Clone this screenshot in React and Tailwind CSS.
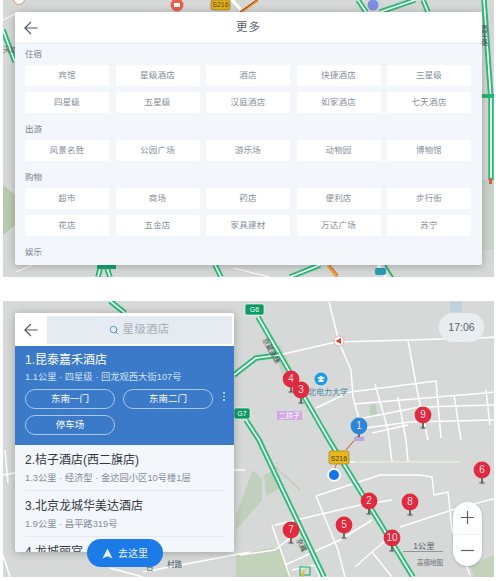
import React from "react";
import { Search } from "lucide-react";

const FONT = { fontFamily: '"Liberation Sans","Noto Sans CJK SC",sans-serif' };

const sections = [
  ["住宿", [["宾馆", "星级酒店", "酒店", "快捷酒店", "三星级"], ["四星级", "五星级", "汉庭酒店", "如家酒店", "七天酒店"]]],
  ["出游", [["风景名胜", "公园广场", "游乐场", "动物园", "博物馆"]]],
  ["购物", [["超市", "商场", "药店", "便利店", "步行街"], ["花店", "五金店", "家具建材", "万达广场", "苏宁"]]],
];

const BackArrow = () => (
  <svg width="16" height="16" viewBox="0 0 16 16" fill="none" stroke="#4f5966" strokeWidth="1.1">
    <path d="M14.5 8H2M8 2 1.8 8 8 14" />
  </svg>
);

function Highway({ points }) {
  return (
    <g fill="none" strokeLinejoin="round">
      <polyline points={points} stroke="#2dbb7a" strokeWidth="5.5" />
      <polyline points={points} stroke="#ffffff" strokeWidth="1.6" />
    </g>
  );
}

function Roads({ lines, width = 1.5 }) {
  return (
    <g fill="none" stroke="#ffffff" strokeWidth={width} strokeLinejoin="round">
      {lines.map((l, i) => (
        <polyline key={i} points={l} />
      ))}
    </g>
  );
}

function Badge({ x, y, w = 19, h = 11, label, color = "#0e9a68", text = "#ffffff", stroke = "#ffffff" }) {
  return (
    <g>
      <rect x={x} y={y} width={w} height={h} rx="2" fill={color} stroke={stroke} strokeWidth="0.6" />
      <text x={x + w / 2} y={y + h - 3} textAnchor="middle" fontSize="7" fill={text}>{label}</text>
    </g>
  );
}

function TopMap() {
  return (
    <svg className="absolute inset-0" width="491" height="277" viewBox="3 0 491 277" style={FONT}>
      <rect x="3" y="0" width="491" height="277" fill="#d5d8d6" />
      <path d="M3 185 L15 195 L15 225 L3 235Z" fill="#b8c9ac" />
      <path d="M482 180 H494 V250 H482Z" fill="#c9d2c9" />
      <Roads width={1} lines={["3,20 15,14", "16,272 40,262", "233,268 270,277"]} />
      <Highway points="3,30 15,62" />
      <Highway points="358,0 366,12" />
      <Highway points="380,12 415,0" />
      <Highway points="423,0 428,12" />
      <Highway points="484,0 491,100 491,180" />
      <rect x="482" y="94" width="12" height="4" fill="#25b574" />
      <rect x="489" y="178" width="3" height="6" fill="#e05a3a" />
      <Highway points="98,277 101,265" />
      <Highway points="110,277 106,265" />
      <rect x="97" y="265" width="19" height="4" fill="#1aa56c" />
      <Highway points="215,265 221,277" />
      <Highway points="290,277 320,265" />
      <polyline points="328,265 337,277" stroke="#e8a33a" strokeWidth="3" fill="none" />
      <polyline points="329,264 338,275" stroke="#d8452f" strokeWidth="1" fill="none" />
      <polyline points="386,277 378,265" stroke="#fff" strokeWidth="3" fill="none" />
      <polyline points="393,277 385,265" stroke="#25b574" strokeWidth="2" fill="none" />
      <rect x="375" y="268" width="11" height="7" rx="2" fill="#2a9fb5" />
      <polyline points="232,0 243,12" stroke="#fff" strokeWidth="3" fill="none" />
      <polyline points="258,0 241,12" stroke="#e8a33a" strokeWidth="3" fill="none" />
      <polyline points="257,0 240,12" stroke="#a52b20" strokeWidth="1" fill="none" />
      <circle cx="177" cy="5" r="6.5" fill="#e8604a" />
      <rect x="174" y="3" width="6" height="4" fill="#fff" />
      <Badge x={211} y={0} w={19} h={10} label="S216" color="#e3b21e" text="#5c4300" stroke="#8a6d10" />
      <circle cx="373" cy="5" r="5.5" fill="#7e8fe0" />
      <circle cx="19" cy="-1" r="5.5" fill="#fff" stroke="#e58d7c" strokeWidth="1" />
      <text x="3" y="52" fontSize="7" fill="#6a6f66">天城</text>
      <text x="484" y="25" fontSize="7" fill="#4b5563" writingMode="vertical-rl">昌平路</text>
    </svg>
  );
}

function Pin({ x, y, n, color = "#e02a40" }) {
  return (
    <g>
      <ellipse cx={x} cy={y + 13} rx="3" ry="1.2" fill="#8f9896" />
      <rect x={x - 0.8} y={y + 6} width="1.6" height="7" fill="#59534f" />
      <circle cx={x} cy={y} r="8.4" fill={color} />
      <text x={x} y={y + 3.4} textAnchor="middle" fontSize="10" fill="#f9dfe0">{n}</text>
    </g>
  );
}

function BottomMap() {
  return (
    <svg className="absolute inset-0" width="491" height="276" viewBox="3 301 491 276" style={FONT}>
      <rect x="3" y="301" width="491" height="276" fill="#d6d9d7" />
      <path d="M236 515 L253 470 L262 480 L262 500 L236 530Z" fill="#c0d0bc" />
      <path d="M264 475 L276 470 L280 488 L266 496Z" fill="#c0d0bc" />
      <path d="M236 555 L278 547 L292 577 L236 577Z" fill="#c3d3bb" />
      <path d="M470 565 L494 555 V577 H474Z" fill="#c3d3bb" />
      <path d="M370 405 L376 404 L377 416 L370 418Z" fill="#bfcfbb" />
      <path d="M273 350 L280 345 L300 385 L285 382Z" fill="#c3d1bd" />
      <path d="M450 302 H462 V312 H450Z" fill="#bcd3db" />
      <Roads
        lines={[
          "329,302 339,342 351,370 353,397 363,433",
          "279,355 336,342 480,338 496,337",
          "316,408 350,392 436,381 441,438",
          "408,340 418,395 428,440",
          "354,404 496,392",
          "358,419 420,407 496,405",
          "365,428 410,422 496,420",
          "372,433 408,425",
          "375,384 388,430 392,462",
          "398,397 406,440 408,462",
          "454,395 461,440",
          "486,390 490,425",
          "350,462 460,462",
          "316,496 380,475 420,475 432,477 434,495 448,492 452,530 470,575",
          "316,496 338,550 345,577",
          "275,525 360,505 392,500",
          "240,555 275,550 300,530",
          "285,565 340,540 372,520",
          "272,525 290,577",
          "355,567 372,552 392,535",
          "372,552 392,577",
          "400,527 452,510 496,498",
          "292,570 315,565 320,577",
          "3,475 15,473",
          "5,450 8,483",
          "234,470 245,470",
          "143,572 250,552",
          "110,568 143,577",
          "3,555 10,577",
        ]}
      />
      <polyline points="270,462 300,490" stroke="#c6c9bd" strokeWidth="1.5" fill="none" />
      <polyline points="355,462 480,462" stroke="#d3d4c4" strokeWidth="1" fill="none" />
      <Highway points="258,317 329,440 413,577" />
      <Highway points="246,420 259,440 324,577" />
      <Highway points="234,375 256,358 279,355" />
      <Highway points="110,301 125,313" />
      <polyline points="339,458 334,470" stroke="#d8452f" strokeWidth="0.8" fill="none" />
      <polyline points="346,450 358,436" stroke="#c94a3c" strokeWidth="1" fill="none" />
      <rect x="300" y="567" width="10" height="8" fill="none" stroke="#25b574" strokeWidth="1.2" />
      <polyline points="302,577 304,570" stroke="#e3c22e" strokeWidth="2" fill="none" />
      <Badge x={245} y={304} label="G6" />
      <Badge x={234} y={408} w={16} label="G7" />
      <rect x="277" y="411" width="25" height="9" fill="#d2a9e2" />
      <text x="289.5" y="418" textAnchor="middle" fontSize="7" fill="#fff">二拱子</text>
      <circle cx="321" cy="379" r="6.5" fill="#1c9be6" />
      <path d="M317 378 L321 376 L325 378 L321 380Z M318.5 380 H323.5 V382 H318.5Z" fill="#fff" />
      <text x="308" y="395" fontSize="8" fill="#3d88a8">北电力大学</text>
      <circle cx="339" cy="341" r="5" fill="#fff" stroke="#e8a090" strokeWidth="0.8" />
      <path d="M335.5 341 L341 338 V344Z" fill="#d8452f" />
      <text x="262" y="340" fontSize="7" fill="#3f4b47" transform="rotate(60 262 340)">京藏高速</text>
      <text x="296" y="540" fontSize="7" fill="#3f4b47" transform="rotate(62 296 540)">京藏</text>
      <Pin x={291} y={379} n="4" />
      <Pin x={359} y={426} n="1" color="#2b86d9" />
      <rect x="354" y="437" width="10" height="4" fill="#b8a6e0" />
      <Pin x={301} y={390} n="3" />
      <Pin x={423} y={415} n="9" />
      <Pin x={482} y={470} n="6" />
      <Pin x={369} y={501} n="2" />
      <Pin x={410} y={502} n="8" />
      <Pin x={344} y={525} n="5" />
      <Pin x={291} y={530} n="7" />
      <Pin x={392} y={538} n="10" />
      <Badge x={329} y={451} w={20} h={13} label="S216" color="#eab71c" text="#4c3a00" stroke="#94720e" />
      <circle cx="334" cy="475" r="7" fill="#ffffff" fillOpacity="0.8" />
      <circle cx="334" cy="475" r="5" fill="#1477e8" />
      <text x="424" y="549" textAnchor="middle" fontSize="8.5" fill="#5d6468">1公里</text>
      <rect x="403" y="551" width="40" height="0.8" fill="#7d8588" />
      <text x="430" y="565" textAnchor="middle" fontSize="6.5" fill="#666d70">高德地图</text>
      <text x="146" y="570" fontSize="7.5" fill="#4b5563">百</text>
      <text x="167" y="567" fontSize="7.5" fill="#4b5563">村路</text>
    </svg>
  );
}

function Item({ title, sub }) {
  return (
    <div className="h-[46px] pt-[6px] mx-[10px] shrink-0 border-b border-[#e6eaf0]">
      <div className="text-[12px] leading-[18px] text-[#30363d] whitespace-nowrap">{title}</div>
      <div className="text-[9.3px] leading-[14px] mt-[2px] text-[#838d99] whitespace-nowrap">{sub}</div>
    </div>
  );
}

function Chip({ children }) {
  return (
    <div className="w-[90px] h-[20px] rounded-full border border-[#a9c8ee] flex items-center justify-center text-[9.5px] text-white">
      {children}
    </div>
  );
}

export default function App() {
  return (
    <div className="w-[496px] h-[581px] bg-white pl-[3px] flex flex-col gap-[24px] overflow-hidden" style={FONT}>
      <div className="relative w-[491px] h-[277px] shrink-0 overflow-hidden">
        <TopMap />
        <div className="absolute left-[12px] top-[12px] w-[467px] h-[253px] bg-[#f3f6fb] rounded-[2px] shadow-[0_1px_8px_rgba(0,0,0,0.25)] overflow-hidden flex flex-col">
          <div className="h-[32px] bg-white border-b border-[#e3e7ec] flex items-center justify-center relative shrink-0">
            <div className="absolute left-[8px] top-[8px]"><BackArrow /></div>
            <span className="text-[11.5px] tracking-[1px] text-[#5d6672]">更多</span>
          </div>
          <div className="pl-[10px] pr-[11px] flex flex-col">
            {sections.map(([label, rows]) => (
              <div key={label} className="flex flex-col">
                <div className="h-[21px] flex items-center text-[8.5px] text-[#7a8490]">{label}</div>
                <div className="flex flex-col gap-[6px] mb-[6px]">
                  {rows.map((row, i) => (
                    <div key={i} className="grid grid-cols-5 gap-[6.5px]">
                      {row.map((t) => (
                        <div key={t} className="h-[21px] bg-white rounded-[2px] flex items-center justify-center text-[8.5px] tracking-[0.2px] text-[#868f9a]">
                          {t}
                        </div>
                      ))}
                    </div>
                  ))}
                </div>
              </div>
            ))}
            <div className="h-[21px] flex items-center text-[8.5px] text-[#7a8490]">娱乐</div>
          </div>
        </div>
      </div>

      <div className="relative w-[491px] h-[276px] shrink-0 overflow-hidden">
        <BottomMap />

        <div className="absolute left-[12px] top-[12px] w-[219px] h-[239px] bg-[#f3f6fb] rounded-[2px] shadow-[0_1px_8px_rgba(0,0,0,0.25)] overflow-hidden flex flex-col">
          <div className="h-[33px] bg-white flex items-center pl-[8px] pr-[2px] gap-[8px] shrink-0">
            <BackArrow />
            <div className="flex-1 h-[28px] bg-[#e6ebf2] flex items-center justify-center gap-[3px] text-[11.5px] text-[#a5aeb9] tracking-[0.3px]">
              <Search size={10} color="#3f88c8" strokeWidth={2} />
              <span>星级酒店</span>
            </div>
          </div>
          <div className="h-[99px] bg-[#3b7ac8] px-[10px] pt-[5px] shrink-0 relative">
            <div className="text-[12px] leading-[18px] text-white">1.昆泰嘉禾酒店</div>
            <div className="text-[9.3px] leading-[14px] mt-[1px] text-[#cfe0f5] whitespace-nowrap">1.1公里 · 四星级 · 回龙观西大街107号</div>
            <div className="flex flex-wrap gap-x-[8px] gap-y-[6px] mt-[5px] w-[190px]">
              <Chip>东南一门</Chip>
              <Chip>东南二门</Chip>
              <Chip>停车场</Chip>
            </div>
            <div className="absolute left-[208px] top-[46px] flex flex-col gap-[2px]">
              <span className="w-[1.5px] h-[1.5px] bg-[#d8e6f7] rounded-full" />
              <span className="w-[1.5px] h-[1.5px] bg-[#d8e6f7] rounded-full" />
              <span className="w-[1.5px] h-[1.5px] bg-[#d8e6f7] rounded-full" />
            </div>
          </div>
          <Item title="2.桔子酒店(西二旗店)" sub="1.3公里 · 经济型 · 金达园小区10号楼1层" />
          <Item title="3.北京龙城华美达酒店" sub="1.9公里 · 昌平路319号" />
          <div className="pt-[6px] mx-[10px] text-[12px] leading-[18px] text-[#30363d] whitespace-nowrap">4.龙城丽宫</div>
        </div>

        <div className="absolute left-[84px] top-[238px] w-[76px] h-[28px] rounded-full bg-[#1c7be6] flex items-center justify-center gap-[5px] text-[10px] text-[#e4f0fd]">
          <svg width="11" height="11" viewBox="0 0 11 11"><path d="M5.5 0.5 10.5 10.5 5.5 8.3 0.5 10.5Z" fill="#e8f2fe" /></svg>
          <span>去这里</span>
        </div>

        <div className="absolute left-[436px] top-[12px] w-[45px] h-[29px] rounded-[14px] bg-[#e9edf0] flex items-center justify-center text-[10.5px] text-[#56606c]">
          17:06
        </div>

        <div className="absolute left-[450px] top-[201px] w-[29px] h-[64px] rounded-full bg-white shadow-[0_1px_3px_rgba(0,0,0,0.2)] flex flex-col">
          <div className="flex-1 flex items-center justify-center border-b border-[#eef0f3]">
            <svg width="15" height="15" viewBox="0 0 15 15" stroke="#56606c" strokeWidth="1.2"><path d="M1 7.5H14M7.5 1V14" /></svg>
          </div>
          <div className="flex-1 flex items-center justify-center">
            <svg width="15" height="15" viewBox="0 0 15 15" stroke="#56606c" strokeWidth="1.2"><path d="M1 7.5H14" /></svg>
          </div>
        </div>
      </div>
    </div>
  );
}
